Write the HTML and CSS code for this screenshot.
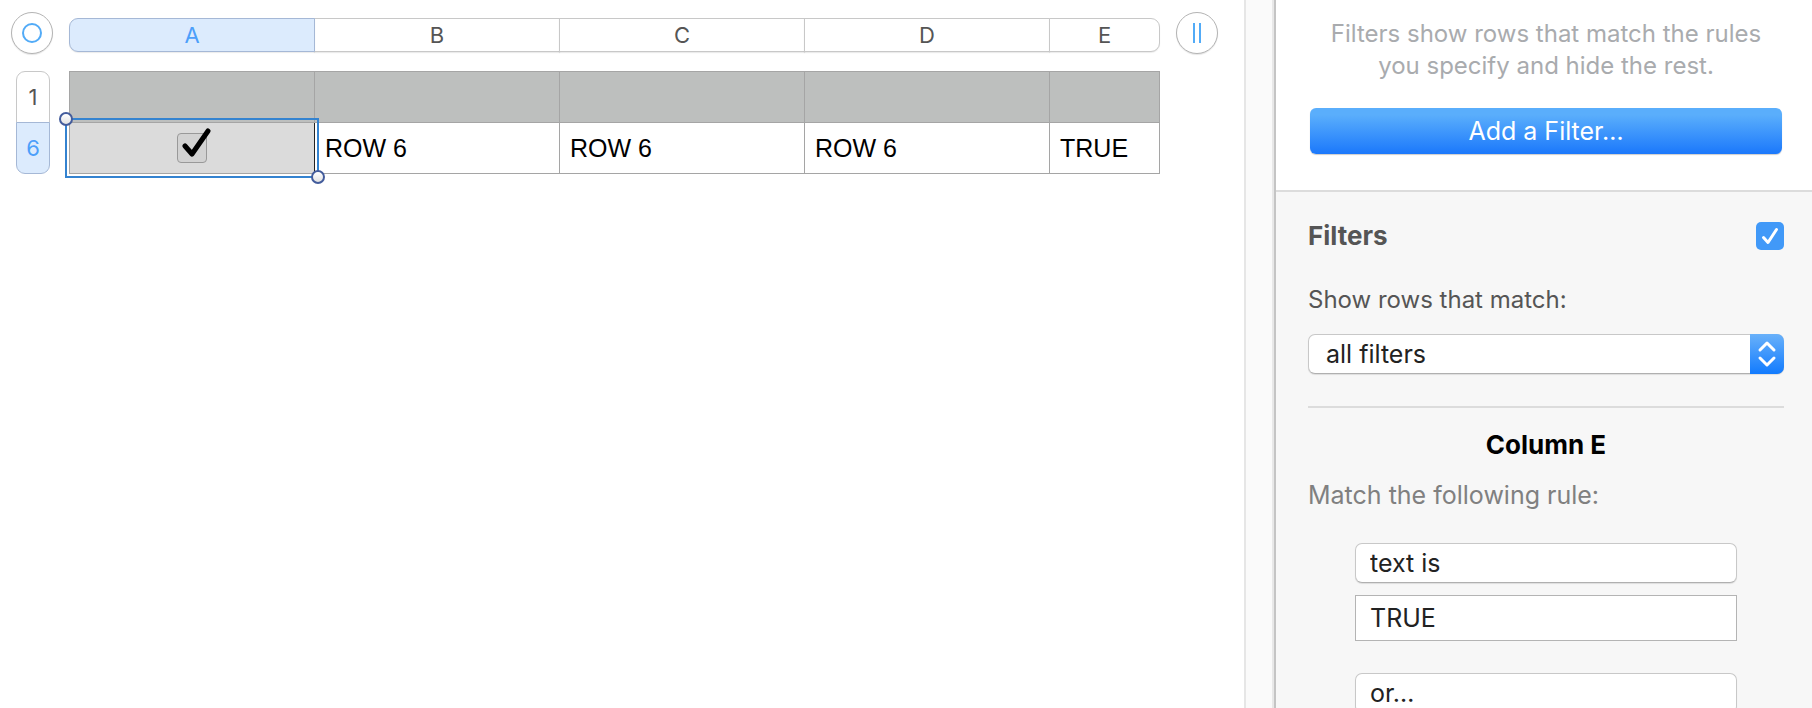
FILE: index.html
```html
<!DOCTYPE html>
<html lang="en">
<head>
  <meta charset="UTF-8">
  <meta name="viewport" content="width=device-width, initial-scale=1.0">
  <title>Filters</title>
  <link rel="stylesheet" href="styles.css">
</head>
<body>
  <div class="container">
    <main class="sheet">
      <button class="round" aria-label="Select table">
        <svg width="22" height="22" viewBox="0 0 22 22"><circle cx="11" cy="11" r="9" fill="none" stroke="#52abf7" stroke-width="2"/></svg>
      </button>
      <div class="columns">
        <button class="active">A</button>
        <button>B</button>
        <button>C</button>
        <button>D</button>
        <button class="short">E</button>
      </div>
      <button class="round" aria-label="Add column">
        <svg width="22" height="22" viewBox="0 0 22 22"><path d="M8 1v20M14 1v20" fill="none" stroke="#52abf7" stroke-width="2"/></svg>
      </button>

      <div class="rows">
        <button>1</button>
        <button class="active">6</button>
      </div>
      <div class="grid">
        <table>
          <colgroup>
            <col><col><col><col><col class="short">
          </colgroup>
          <thead>
            <tr><th></th><th></th><th></th><th></th><th></th></tr>
          </thead>
          <tbody>
            <tr>
              <td class="selected">
                <label class="cell-check">
                  <input type="checkbox" aria-label="A6" checked>
                  <svg width="36" height="36" viewBox="0 0 36 36"><path d="M8 18l7 8L31 3" fill="none" stroke="#000" stroke-width="5" stroke-linecap="round" stroke-linejoin="round"/></svg>
                </label>
              </td>
              <td>ROW 6</td>
              <td>ROW 6</td>
              <td>ROW 6</td>
              <td>TRUE</td>
            </tr>
          </tbody>
        </table>
        <div class="selection"></div>
      </div>
    </main>
    <div class="gutter"></div>
    <aside class="panel">
      <div class="intro">
        <p>Filters show rows that match the rules you specify and hide the rest.</p>
        <button class="add">Add a Filter…</button>
      </div>
      <div class="filters">
        <div class="title">
          <label for="enabled">Filters</label>
          <span class="switch">
            <input type="checkbox" id="enabled" checked>
            <svg width="28" height="28" viewBox="0 0 28 28"><path d="M7.500 15.500l4.500 5L20.500 7.500" fill="none" stroke="#fff" stroke-width="3" stroke-linecap="round" stroke-linejoin="round"/></svg>
          </span>
        </div>
        <label class="match" for="match">Show rows that match:</label>
        <div class="popup">
          <select id="match">
            <option>all filters</option>
            <option>any filter</option>
          </select>
          <span class="arrows">
            <svg width="34" height="40" viewBox="0 0 34 40"><path d="M10 16l7-7 7 7M10 24l7 7 7-7" fill="none" stroke="#fff" stroke-width="3" stroke-linecap="round" stroke-linejoin="round"/></svg>
          </span>
        </div>
        <hr>
        <h2>Column E</h2>
        <p class="hint">Match the following rule:</p>
        <div class="rule">
          <select aria-label="Rule">
            <option>text is</option>
            <option>text is not</option>
          </select>
          <input type="text" aria-label="Value" value="TRUE">
          <select aria-label="Add rule">
            <option>or…</option>
          </select>
        </div>
      </div>
    </aside>
  </div>
</body>
</html>
```

FILE: styles.css
```css
*, *::before, *::after {
  box-sizing: border-box;
}
body {
  margin: 0;
  background-color: #fff;
  font-family: Inter, sans-serif;
}
button, input, select {
  margin: 0;
  font-family: inherit;
}
.container {
  display: flex;
  height: 100vh;
  overflow: hidden;
}
.sheet {
  flex: 1;
  display: grid;
  grid-template-columns: 42px 1091px 42px;
  grid-template-rows: 46px auto;
  gap: 13px 16px;
  align-content: start;
  padding: 12px 0 0 11px;
}
.round {
  display: flex;
  align-items: center;
  justify-content: center;
  width: 42px;
  height: 42px;
  padding: 0;
  border: 1px solid #b4b4b4;
  border-radius: 50%;
  background-color: #fff;
  box-shadow: 0 1px 1px rgba(0, 0, 0, 0.1);
}

/* column and row headers */
.columns {
  display: flex;
  align-self: center;
  height: 34px;
}
.columns button,
.rows button {
  padding: 0;
  border: 1px solid #c8c8c8;
  background-color: #fff;
  color: #555;
  font-size: 22px;
  line-height: 32px;
}
.columns button {
  width: 246px;
  margin-right: -1px;
  box-shadow: 0 1px 1px rgba(0, 0, 0, 0.08);
}
.columns button.short {
  width: 111px;
  margin-right: 0;
  border-radius: 0 9px 9px 0;
}
.columns button:first-child {
  border-radius: 9px 0 0 9px;
}
.columns button.active,
.rows button.active {
  position: relative;
  border-color: #a5b8d6;
  background-color: #dcebfd;
  color: #4c9ffa;
}
.rows {
  display: flex;
  flex-direction: column;
  width: 34px;
  margin-left: 5px;
}
.rows button {
  height: 52px;
}
.rows button:first-child {
  margin-bottom: -1px;
  border-radius: 9px 9px 0 0;
}
.rows button:last-child {
  border-radius: 0 0 9px 9px;
}

/* table */
.grid {
  position: relative;
}
table {
  width: 100%;
  table-layout: fixed;
  border-collapse: collapse;
}
col {
  width: 245px;
}
col.short {
  width: 110px;
}
th, td {
  height: 51px;
  padding: 0 10px;
  border: 1px solid #a5a5a5;
  font-family: "Liberation Sans", sans-serif;
  font-size: 25px;
  text-align: left;
}
th {
  background-color: #bdbfbe;
}
td.selected {
  border-right-color: #222;
  background-color: #dbdbdb;
}
.cell-check {
  display: block;
  position: relative;
  width: 30px;
  height: 30px;
  margin: 0 auto;
}
.cell-check input {
  display: block;
  width: 30px;
  height: 30px;
  appearance: none;
  border: 1px solid #999;
  border-radius: 4px;
  background-color: #d2d2d2;
}
.cell-check svg {
  position: absolute;
  left: 0;
  top: -5px;
}
.selection {
  position: absolute;
  left: -4px;
  top: 47px;
  width: 254px;
  height: 60px;
  border: 2px solid #3483d0;
  pointer-events: none;
}
.selection::before,
.selection::after {
  content: "";
  position: absolute;
  width: 14px;
  height: 14px;
  border: 2px solid #435c9c;
  border-radius: 50%;
  background: linear-gradient(#fff, #e2e2e2);
}
.selection::before {
  left: -8px;
  top: -8px;
}
.selection::after {
  right: -8px;
  bottom: -8px;
}

/* right side */
.gutter {
  width: 30px;
  border-left: 2px solid #e6e6e6;
  border-right: 2px solid #e8e8e8;
  background-color: #fafafa;
}
.panel {
  width: 538px;
  border-left: 2px solid #c4c4c4;
  background-color: #f7f7f7;
}
.intro {
  padding: 18px 30px 36px 34px;
  border-bottom: 2px solid #dcdcdc;
  background-color: #fff;
}
.intro p {
  margin: 0 16px 26px;
  color: #a9abae;
  font-size: 24px;
  line-height: 32px;
  text-align: center;
}
.add {
  display: block;
  width: 100%;
  height: 46px;
  padding: 0;
  border: 0;
  border-radius: 6px;
  background: linear-gradient(#5aaefc 15%, #1b78fb);
  box-shadow: 0 1px 1px rgba(0, 0, 0, 0.2);
  color: #fff;
  font-size: 25px;
}
.filters {
  padding: 30px 28px 0 32px;
}
.title {
  display: flex;
  align-items: center;
  justify-content: space-between;
  color: #555;
  font-size: 26px;
  font-weight: 700;
  line-height: 28px;
}
.switch {
  position: relative;
  height: 28px;
}
.switch input {
  width: 28px;
  height: 28px;
  appearance: none;
  border-radius: 5px;
  background-color: #4199f8;
}
.switch svg {
  position: absolute;
  left: 0;
  top: 0;
  pointer-events: none;
}
.match {
  display: block;
  margin: 34px 0 18px;
  color: #555;
  font-size: 24px;
  line-height: 32px;
}
.popup {
  position: relative;
}
select {
  display: block;
  width: 100%;
  height: 40px;
  padding: 0 14px;
  appearance: none;
  border: 1px solid #c8c8c8;
  border-bottom-color: #b0b0b0;
  border-radius: 7px;
  background-color: #fff;
  box-shadow: 0 1px 1px rgba(0, 0, 0, 0.1);
  color: #222;
  font-size: 25px;
}
.popup select {
  padding-left: 17px;
}
.arrows {
  position: absolute;
  right: 0;
  top: 0;
  height: 40px;
  border-radius: 0 7px 7px 0;
  background: linear-gradient(#69b1fa, #127bfe);
  pointer-events: none;
}
hr {
  height: 2px;
  margin: 32px 0 21px;
  border: 0;
  background-color: #dcdcdc;
}
h2 {
  margin: 0 0 18px;
  color: #000;
  font-size: 26px;
  font-weight: 700;
  line-height: 32px;
  text-align: center;
}
.hint {
  margin: 0 0 32px;
  color: #808080;
  font-size: 25px;
  line-height: 32px;
}
.rule {
  margin: 0 47px;
}
.rule input {
  display: block;
  width: 100%;
  height: 46px;
  margin: 12px 0 32px;
  padding: 0 14px;
  border: 1px solid #b4b4b4;
  background-color: #fff;
  color: #222;
  font-size: 25px;
}
```
